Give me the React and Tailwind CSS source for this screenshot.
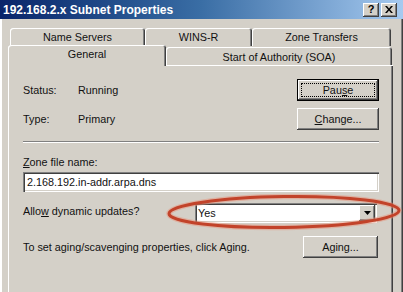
import React from "react";

// Win2000 style 3D edges
const raised =
  "shadow-[inset_-1px_-1px_0_#404040,inset_1px_1px_0_#ffffff,inset_-2px_-2px_0_#808080]";
const sunken =
  "shadow-[inset_1px_1px_0_#808080,inset_2px_2px_0_#404040,inset_-1px_-1px_0_#ffffff,inset_-2px_-2px_0_#d4d0c8]";

function Button({ children, width, focused }) {
  return (
    <div
      className={`${width} h-[22px] flex items-stretch p-[4px] bg-[#d4d0c8] ${
        focused
          ? "shadow-[inset_0_0_0_1px_#000000,inset_-2px_-2px_0_#404040,inset_2px_2px_0_#ffffff,inset_-3px_-3px_0_#808080]"
          : raised
      }`}
    >
      <div
        className={`flex-1 flex items-center justify-center leading-none ${
          focused ? "border border-dotted border-black" : ""
        }`}
      >
        {children}
      </div>
    </div>
  );
}

function BackTab({ label, width }) {
  return (
    <div
      className={`${width} h-[18px] rounded-t-[3px] flex items-start justify-center pt-[4px] leading-none shadow-[inset_1px_1px_0_#ffffff,inset_-1px_0_0_#404040,inset_-2px_0_0_#808080]`}
    >
      {label}
    </div>
  );
}

export default function App() {
  return (
    <div className="relative w-[403px] h-[292px] overflow-hidden bg-[#d4d0c8] text-[10.8px] text-[#111] font-['Liberation_Sans',Arial,sans-serif] shadow-[inset_2px_0_0_#ffffff,inset_-1px_0_0_#404040,inset_-2px_0_0_#808080]">
      {/* title bar */}
      <div className="h-[19px] flex items-center pl-[3px] pr-[6px] bg-linear-to-r from-[#0a246a] via-[#3a6ea5] to-[#a6caf0]">
        <span className="text-white font-bold text-[12px] leading-none">
          192.168.2.x Subnet Properties
        </span>
        <div className="ml-auto flex gap-[2px]">
          <div className={`w-[16px] h-[14px] bg-[#d4d0c8] ${raised} flex items-center justify-center text-[11px] font-bold leading-none text-black`}>
            ?
          </div>
          <div className={`w-[16px] h-[14px] bg-[#d4d0c8] ${raised} flex items-center justify-center`}>
            <svg width="8" height="7" viewBox="0 0 8 7">
              <path d="M0 0h2l2 2.5L6 0h2L5 3.5 8 7H6L4 4.5 2 7H0l3-3.5z" fill="#000" />
            </svg>
          </div>
        </div>
      </div>

      {/* tabs */}
      <div className="mt-[9px] ml-[10px] flex">
        <BackTab label="Name Servers" width="w-[135px]" />
        <BackTab label="WINS-R" width="w-[107px]" />
        <BackTab label="Zone Transfers" width="w-[139px]" />
      </div>
      <div className="-mt-[1px] ml-[8px] flex items-end h-[20px]">
        <div className="relative z-10 w-[158px] h-[21px] -mb-[1px] bg-[#d4d0c8] rounded-t-[3px] flex justify-center pt-[4px] leading-none shadow-[inset_1px_1px_0_#ffffff,inset_-1px_0_0_#404040,inset_-2px_0_0_#808080]">
          General
        </div>
        <div className="w-[226px] h-[18px] rounded-t-[3px] flex justify-center pt-[5px] leading-none shadow-[inset_1px_1px_0_#ffffff,inset_-1px_0_0_#404040,inset_-2px_0_0_#808080]">
          Start of Authority (SOA)
        </div>
      </div>

      {/* panel */}
      <div className="ml-[8px] w-[385px] h-[240px] pt-[14px] pl-[15px] pr-[14px] shadow-[inset_1px_1px_0_#ffffff,inset_-1px_0_0_#404040,inset_-2px_0_0_#808080]">
        <div className="flex items-center h-[22px]">
          <span className="w-[55px]">Status:</span>
          <span>Running</span>
          <div className="ml-auto">
            <Button width="w-[82px]" focused>
              Pau<u>s</u>e
            </Button>
          </div>
        </div>
        <div className="flex items-center h-[22px] mt-[7px]">
          <span className="w-[55px]">Type:</span>
          <span>Primary</span>
          <div className="ml-auto">
            <Button width="w-[82px]">
              <u>C</u>hange...
            </Button>
          </div>
        </div>

        <div className="mt-[11px] h-[2px] border-t border-[#808080] border-b border-b-white" />

        <div className="mt-[12px] leading-[14px]">
          <u>Z</u>one file name:
        </div>
        <div className={`mt-[3px] h-[20px] bg-white ${sunken} flex items-center pl-[4px] leading-none`}>
          2.168.192.in-addr.arpa.dns
        </div>

        <div className="mt-[11px] flex">
          <span className="mt-[1px] leading-[14px]">
            Allo<u>w</u> dynamic updates?
          </span>
          <div className={`ml-auto mr-[2px] w-[182px] h-[20px] bg-white ${sunken} flex items-center pl-[3px] pr-[2px]`}>
            <span className="leading-none">Yes</span>
            <div className={`ml-auto w-[16px] h-[16px] bg-[#d4d0c8] ${raised} flex items-center justify-center`}>
              <svg width="7" height="4" viewBox="0 0 7 4">
                <path d="M0 0h7L3.5 4z" fill="#000" />
              </svg>
            </div>
          </div>
        </div>

        <div className="mt-[13px] flex items-center h-[22px]">
          <span>To set aging/scavenging properties, click Aging.</span>
          <div className="ml-auto mr-[1px]">
            <Button width="w-[75px]">Aging...</Button>
          </div>
        </div>
      </div>

      {/* red annotation ring */}
      <svg
        className="absolute left-[166px] top-[193px] pointer-events-none"
        width="237"
        height="38"
        viewBox="0 0 237 38"
      >
        <g transform="rotate(-0.8 118 19)">
          <ellipse cx="118" cy="19" rx="115" ry="15.5" fill="none" stroke="#e8937c" strokeOpacity="0.5" strokeWidth="5.5" />
          <ellipse cx="118" cy="19" rx="115" ry="15.5" fill="none" stroke="#c2432a" strokeWidth="3" />
        </g>
      </svg>
    </div>
  );
}
